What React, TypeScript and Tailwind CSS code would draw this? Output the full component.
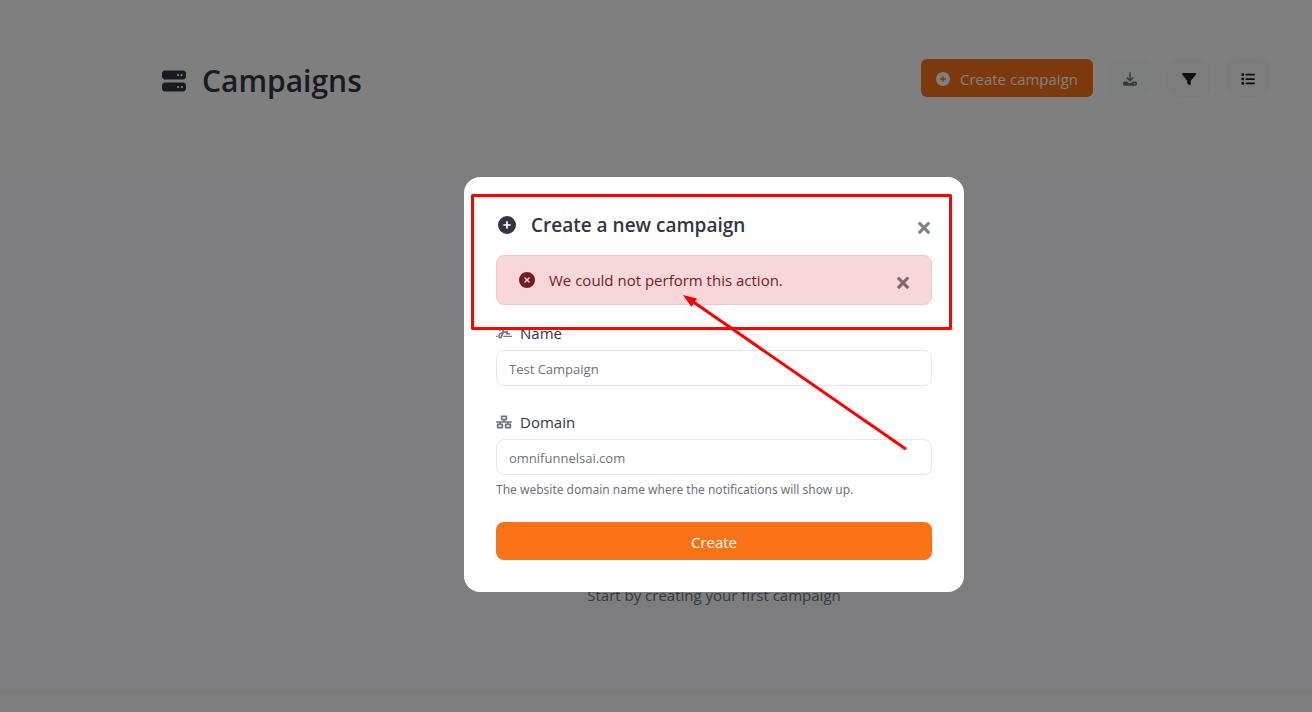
import { FaServer, FaCirclePlus, FaCircleXmark, FaFilter, FaList, FaSignature, FaNetworkWired } from "react-icons/fa6";
import type { ReactNode } from "react";

function ToolButton({ label, children, tint }: { label: string; children: ReactNode; tint: string }) {
  return (
    <button type="button" aria-label={label} className={`flex h-[38px] w-11 items-center justify-center rounded-xl pt-0.5 text-sm ${tint}`}>
      {children}
    </button>
  );
}

function DownloadIcon() {
  return (
    <svg viewBox="0 0 14 14" className="h-[14px] w-[14px]" fill="none" stroke="currentColor">
      <path d="M7 .9v7.6M4.200 5.900 7 8.700l2.800-2.800" strokeWidth="1.500" strokeLinecap="round" strokeLinejoin="round" />
      <path fillRule="evenodd" d="M1.600 9.600h2.300l1.700 1.200a2.400 2.400 0 0 0 2.800 0l1.700-1.200h2.300c.9 0 1.600.7 1.600 1.600v.9c0 .9-.7 1.600-1.600 1.600H1.600C.7 13.700 0 13 0 12.100v-.9c0-.9.7-1.600 1.600-1.600Zm10 1.300a.8.8 0 1 0 0 1.600.8.8 0 0 0 0-1.600Z" fill="currentColor" stroke="none" />
    </svg>
  );
}

export default function App() {
  return (
    <div className="relative min-h-screen bg-white font-['Open_Sans','Noto_Sans',sans-serif] text-[#30363f]">
      <div className="flex min-h-screen flex-col">
        <header className="flex h-[168px] items-start justify-between pt-[59px] pr-[42px] pl-[162px]">
          <h1 className="flex items-center gap-4 text-[30px] leading-11 font-semibold">
            <FaServer className="h-6 w-6" />
            Campaigns
          </h1>
          <div className="flex gap-[15px]">
            <button type="button" className="flex h-[38px] items-center gap-2.5 rounded-md bg-[#f97316] px-[15px] pt-0.5 text-[15px] text-white">
              <FaCirclePlus className="text-sm" />
              Create campaign
            </button>
            <ToolButton label="Export" tint="bg-[#f8fafa] text-[#6b6f74]"><DownloadIcon /></ToolButton>
            <ToolButton label="Filters" tint="bg-[#f8f8f8] text-[#1c202a]"><FaFilter /></ToolButton>
            <ToolButton label="Bulk actions" tint="bg-[#f8f8f8] text-[#1c202a]"><FaList /></ToolButton>
          </div>
        </header>
        <main className="flex flex-1 flex-col items-center justify-end bg-[#fafafe] pb-[87px] pl-[116px] text-[15px] leading-6 text-[#6b7280]">
          <p>Start by creating your first campaign</p>
        </main>
        <footer className="h-[18px]" />
      </div>

      <div className="absolute inset-0 bg-black/50 pt-[177px] pl-[116px]">
        <section role="dialog" aria-modal="true" aria-labelledby="dialog-title" className="relative mx-auto w-[500px] rounded-2xl bg-white p-8">
          <div className="flex h-8 items-center">
            <h2 id="dialog-title" className="flex items-center gap-[15px] text-[19px] font-semibold">
              <FaCirclePlus className="ml-0.5 h-[18px] w-[18px]" />
              Create a new campaign
            </h2>
            <button type="button" aria-label="Close" className="ml-auto pt-1 text-[28px] leading-8 font-bold text-[#808080]">×</button>
          </div>
          <div role="alert" className="mt-3.5 flex h-[50px] items-center gap-3.5 rounded-lg border border-[#f5c6cb] bg-[#f8d7da] pr-5 pl-[22px] text-[15px] text-[#721c24]">
            <FaCircleXmark className="h-4 w-4" />
            We could not perform this action.
            <button type="button" aria-label="Dismiss" className="ml-auto pt-1 text-[28px] leading-8 font-bold text-[#7c6b6d]">×</button>
          </div>
          <form>
            <label htmlFor="name" className="mt-4 flex h-6 items-center gap-2 text-[15px]"><FaSignature className="h-[14px] w-4 text-[#6b7280]" />Name</label>
            <input id="name" defaultValue="Test Campaign" className="mt-[5px] block h-9 w-full rounded-lg border border-[#e5e7eb] px-3 pt-0.5 text-[13px] text-[#6b7280]" />
            <label htmlFor="domain" className="mt-6 flex h-6 items-center gap-2 text-[15px]"><FaNetworkWired className="h-[14px] w-4 text-[#6b7280]" />Domain</label>
            <input id="domain" defaultValue="omnifunnelsai.com" className="mt-[5px] block h-9 w-full rounded-lg border border-[#e5e7eb] px-3 pt-0.5 text-[13px] text-[#6b7280]" />
            <p className="mt-[5px] font-['Noto_Sans',sans-serif] text-xs leading-5 text-[#6b7280]">The website domain name where the notifications will show up.</p>
            <button type="submit" className="mt-[22px] block h-[38px] w-full rounded-lg bg-[#f97316] pt-0.5 text-[15px] text-white">Create</button>
          </form>
          <svg className="pointer-events-none absolute top-0 left-0 h-[300px] w-[500px]" viewBox="0 0 500 300" fill="none" stroke="#f00" strokeWidth="3" strokeLinecap="round">
            <rect x="8.500" y="18.500" width="478" height="133" strokeLinejoin="round" />
            <path d="M228 124 441 271.500" />
            <path d="m219 118 14 3.500-5.500 8.500z" fill="#f00" stroke="none" />
          </svg>
        </section>
      </div>
    </div>
  );
}
